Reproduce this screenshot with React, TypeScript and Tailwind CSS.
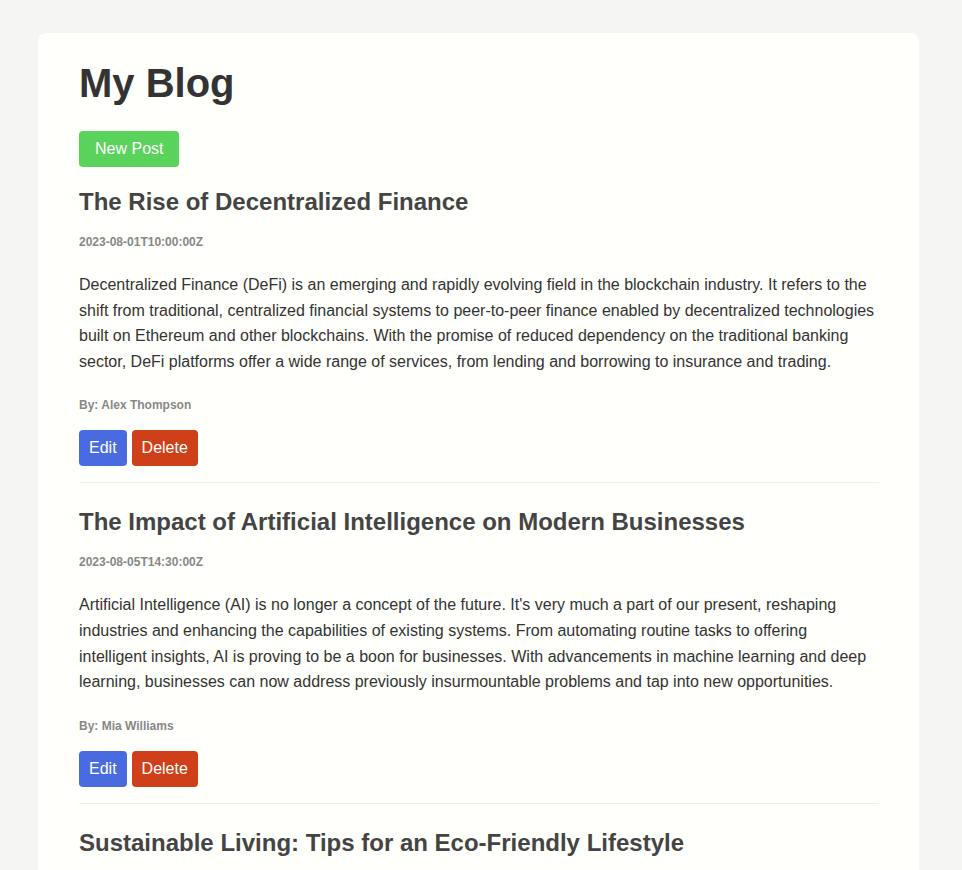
const posts = [
  {
    title: "The Rise of Decentralized Finance",
    date: "2023-08-01T10:00:00Z",
    body: "Decentralized Finance (DeFi) is an emerging and rapidly evolving field in the blockchain industry. It refers to the shift from traditional, centralized financial systems to peer-to-peer finance enabled by decentralized technologies built on Ethereum and other blockchains. With the promise of reduced dependency on the traditional banking sector, DeFi platforms offer a wide range of services, from lending and borrowing to insurance and trading.",
    author: "Alex Thompson",
  },
  {
    title: "The Impact of Artificial Intelligence on Modern Businesses",
    date: "2023-08-05T14:30:00Z",
    body: "Artificial Intelligence (AI) is no longer a concept of the future. It's very much a part of our present, reshaping industries and enhancing the capabilities of existing systems. From automating routine tasks to offering intelligent insights, AI is proving to be a boon for businesses. With advancements in machine learning and deep learning, businesses can now address previously insurmountable problems and tap into new opportunities.",
    author: "Mia Williams",
  },
  {
    title: "Sustainable Living: Tips for an Eco-Friendly Lifestyle",
    date: "2023-08-10T09:15:00Z",
    body: "Sustainability is more than just a buzzword; it's a way of life. As the effects of climate change become more evident, there's a growing realization about the need to adopt eco-friendly habits. From reducing waste to conserving energy, small changes in our daily routines can make a big difference for the planet.",
    author: "Sophia Martinez",
  },
];

function Post({ post, first }: { post: (typeof posts)[number]; first: boolean }) {
  return (
    <div className={`${first ? "mt-[21px]" : "mt-[25px]"} border-b border-[#f2f0dc] pb-[16px]`}>
      <h2 className="text-2xl font-bold leading-[28px] text-[#444]">{post.title}</h2>
      <p className="mt-[19px] text-xs font-bold leading-[14px] text-[#888]">{post.date}</p>
      <p className="mt-[23px] max-w-[797px] text-base leading-[1.6] text-[#333]">{post.body}</p>
      <p className="mt-[24px] text-xs font-bold leading-[14px] text-[#888]">By: {post.author}</p>
      <div className="mt-[18px] flex gap-[5px]">
        <button className="h-[36px] rounded bg-[#4a6be0] px-[10px] text-base text-white">Edit</button>
        <button className="h-[36px] rounded bg-[#cf3f1a] px-[10px] text-base text-white">Delete</button>
      </div>
    </div>
  );
}

export default function App() {
  return (
    <div className="min-h-screen bg-[#f5f5f4] pt-[33px] font-['Liberation_Sans',Arial,sans-serif]">
      <div className="ml-[38px] w-[881px] rounded-lg bg-[#fffffb] pl-[41px] pr-[40px] pt-[27px] pb-10">
        <h1 className="text-[40px] font-bold leading-[46px] text-[#333]">My Blog</h1>
        <button className="mt-[25px] h-[36px] rounded bg-[#5ad35c] px-4 text-base text-white">New Post</button>
        {posts.map((p, i) => (
          <Post key={p.title} post={p} first={i === 0} />
        ))}
      </div>
    </div>
  );
}
